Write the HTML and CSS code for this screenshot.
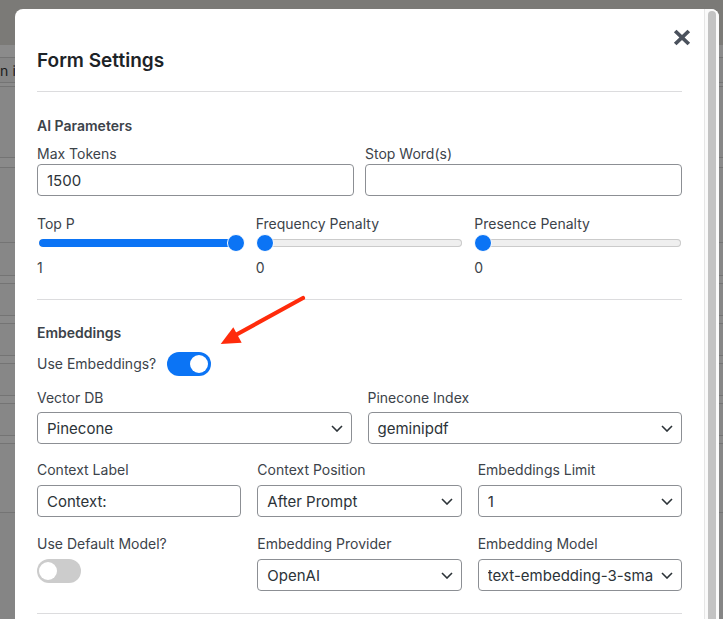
FILE: index.html
```html
<!DOCTYPE html>
<html lang="en">
<head>
<meta charset="utf-8">
<title>Form Settings</title>
<link rel="stylesheet" href="styles.css">
</head>
<body>
<div class="page">
  <div class="bg-row r1"></div>
  <div class="bg-row r2"></div>
  <div class="bg-row r3"><span class="bg-text">n icon</span></div>
  <div class="bg-row r4"></div>
  <div class="bg-row r5"></div>
  <div class="bg-row r6"></div>
  <div class="bg-row r7"></div>
  <div class="bg-row r8"></div>
  <div class="bg-row r9"></div>
  <div class="bg-row r10"></div>
  <div class="bg-row r9"></div>
  <div class="bg-row r10"></div>
  <div class="bg-row r9"></div>
  <div class="bg-row r10"></div>
  <div class="bg-row r9"></div>
  <div class="bg-row r10"></div>
  <div class="bg-row r9"></div>
  <div class="bg-row r11"></div>
</div>

<div class="modal">
  <div class="modal-body">
    <header class="modal-header">
      <h1 class="modal-title">Form Settings</h1>
    </header>

    <section class="section ai">
      <h2 class="section-title">AI Parameters</h2>
      <div class="grid two tight">
        <div class="field">
          <label class="label">Max Tokens</label>
          <input class="input" type="text" value="1500">
        </div>
        <div class="field">
          <label class="label">Stop Word(s)</label>
          <input class="input" type="text" value="">
        </div>
      </div>
      <div class="grid three tight sliders">
        <div class="field">
          <label class="label">Top P</label>
          <div class="range" style="--v:1">
            <div class="track"><div class="fill"></div></div>
            <span class="thumb"></span>
          </div>
          <div class="value">1</div>
        </div>
        <div class="field">
          <label class="label">Frequency Penalty</label>
          <div class="range" style="--v:0">
            <div class="track"><div class="fill"></div></div>
            <span class="thumb"></span>
          </div>
          <div class="value">0</div>
        </div>
        <div class="field">
          <label class="label">Presence Penalty</label>
          <div class="range" style="--v:0">
            <div class="track"><div class="fill"></div></div>
            <span class="thumb"></span>
          </div>
          <div class="value">0</div>
        </div>
      </div>
    </section>

    <section class="section emb">
      <h2 class="section-title">Embeddings</h2>
      <div class="toggle-row">
        <span class="label">Use Embeddings?</span>
        <span class="toggle on"><span class="knob"></span></span>
      </div>
      <div class="grid two wide row-vec">
        <div class="field">
          <label class="label">Vector DB</label>
          <div class="select"><span class="sel-val">Pinecone</span><svg class="chev" width="12" height="7" viewBox="0 0 12 7"><path d="M1 1l5 5 5-5" fill="none" stroke="#2c3338" stroke-width="1.6"/></svg></div>
        </div>
        <div class="field">
          <label class="label">Pinecone Index</label>
          <div class="select"><span class="sel-val">geminipdf</span><svg class="chev" width="12" height="7" viewBox="0 0 12 7"><path d="M1 1l5 5 5-5" fill="none" stroke="#2c3338" stroke-width="1.6"/></svg></div>
        </div>
      </div>
      <div class="grid three wide row-ctx">
        <div class="field">
          <label class="label">Context Label</label>
          <input class="input" type="text" value="Context:">
        </div>
        <div class="field">
          <label class="label">Context Position</label>
          <div class="select"><span class="sel-val">After Prompt</span><svg class="chev" width="12" height="7" viewBox="0 0 12 7"><path d="M1 1l5 5 5-5" fill="none" stroke="#2c3338" stroke-width="1.6"/></svg></div>
        </div>
        <div class="field">
          <label class="label">Embeddings Limit</label>
          <div class="select"><span class="sel-val">1</span><svg class="chev" width="12" height="7" viewBox="0 0 12 7"><path d="M1 1l5 5 5-5" fill="none" stroke="#2c3338" stroke-width="1.6"/></svg></div>
        </div>
      </div>
      <div class="grid three wide row-model">
        <div class="field">
          <label class="label">Use Default Model?</label>
          <span class="toggle off"><span class="knob"></span></span>
        </div>
        <div class="field">
          <label class="label">Embedding Provider</label>
          <div class="select"><span class="sel-val">OpenAI</span><svg class="chev" width="12" height="7" viewBox="0 0 12 7"><path d="M1 1l5 5 5-5" fill="none" stroke="#2c3338" stroke-width="1.6"/></svg></div>
        </div>
        <div class="field">
          <label class="label">Embedding Model</label>
          <div class="select"><span class="sel-val">text-embedding-3-small</span><svg class="chev" width="12" height="7" viewBox="0 0 12 7"><path d="M1 1l5 5 5-5" fill="none" stroke="#2c3338" stroke-width="1.6"/></svg></div>
        </div>
      </div>
    </section>
    <div class="section-end"></div>
  </div>

  <div class="scrollbar"><div class="scroll-thumb"></div></div>

  <button class="close" type="button" aria-label="Close">
    <svg width="18" height="17" viewBox="0 0 18 17"><path d="M2.2 2L15.8 15M15.8 2L2.2 15" stroke="#4b525d" stroke-width="3.8" fill="none"/></svg>
  </button>

  <svg class="annot-arrow" width="100" height="60" viewBox="0 0 100 60">
    <path d="M95 3 L24 42" stroke="#ff2b0b" stroke-width="4.2" stroke-linecap="round" fill="none"/>
    <polygon points="25.3,32.3 12.7,49 33.7,47.7" fill="#ff2b0b"/>
  </svg>
</div>
</body>
</html>
```
FILE: styles.css
```css
* { box-sizing: border-box; }

html, body {
  margin: 0;
  padding: 0;
  width: 723px;
  height: 619px;
  overflow: hidden;
}

body {
  background: #858585;
  font-family: "Inter", "Noto Sans", sans-serif;
  position: relative;
}

/* background page (dimmed) */
.page { display: flex; flex-direction: column; }
.bg-row { border-bottom: 1px solid #747474; background: #878787; }
.r1 { height: 45px; background: #7b7a77; border-bottom-color: #7b7a77; }
.r2 { height: 13px; background: #8b8b8b; }
.r3 { height: 25px; background: #868686; display: flex; align-items: center; }
.r4 { height: 4px; background: #8a8a8a; }
.r5 { height: 71px; }
.r6 { height: 10px; background: #8a8a8a; }
.r7 { height: 75px; }
.r8 { height: 33px; }
.r9 { height: 8px; background: #8a8a8a; }
.r10 { height: 32px; }
.r11 { height: 69px; }
.bg-text { font-size: 14px; color: #1c1c1c; padding-left: 0; white-space: nowrap; letter-spacing: 0.2px; }

/* modal */
.modal {
  position: absolute;
  left: 15px;
  top: 9px;
  width: 704px;
  height: 640px;
  background: #fff;
  border-radius: 8px 8px 0 0;
  display: flex;
  overflow: hidden;
}

.modal-body {
  flex: 1;
  padding: 0 22px;
  min-width: 0;
}

.modal-header {
  padding: 38px 0 16px;
  border-bottom: 1px solid #dcdcde;
}

.modal-title {
  margin: 0;
  font-size: 19px;
  line-height: 28px;
  font-weight: 600;
  color: #1d2327;
}

.close {
  position: absolute;
  right: 28px;
  top: 20px;
  width: 18px;
  height: 17px;
  padding: 0;
  border: 0;
  background: none;
  display: flex;
}

.scrollbar {
  width: 15px;
  flex: none;
  background: #fafafa;
  border-left: 1px solid #e6e6e6;
  padding: 2px 3px 0 3px;
}
.scroll-thumb {
  height: 100%;
  background: #c3c3c3;
  border-radius: 4px;
}

.annot-arrow {
  position: absolute;
  left: 193px;
  top: 286px;
}

/* sections */
.section { border-bottom: 1px solid #dcdcde; }
.section.ai { padding: 24px 0 21px; }
.section.emb { padding: 23px 0 22px; }

.section-title {
  margin: 0 0 8px;
  font-size: 14px;
  line-height: 20px;
  font-weight: 600;
  color: #3c434a;
}

.label {
  display: block;
  font-size: 14px;
  line-height: 20px;
  color: #3c434a;
}

.grid { display: grid; }
.grid.two { grid-template-columns: 1fr 1fr; }
.grid.three { grid-template-columns: 1fr 1fr 1fr; }
.grid.tight { column-gap: 11px; }
.grid.wide { column-gap: 16px; }

.field { display: flex; flex-direction: column; min-width: 0; }

.sliders { margin-top: 18px; }

.input, .select {
  height: 32px;
  border: 1px solid #8c8f94;
  border-radius: 4px;
  background: #fff;
  font-family: "Inter", "Noto Sans", sans-serif;
  font-size: 15px;
  color: #2c3338;
  padding: 0 9px;
  width: 100%;
  outline: none;
}

.select {
  display: flex;
  align-items: center;
  gap: 8px;
}
.sel-val {
  flex: 1;
  overflow: hidden;
  white-space: nowrap;
  min-width: 0;
}
.chev { flex: none; margin-right: -1px; }

.row-vec .select { margin-top: 4px; }
.row-vec { margin-top: 12px; }
.row-ctx { margin-top: 16px; }
.row-ctx .input, .row-ctx .select { margin-top: 5px; }
.row-model { margin-top: 17px; }
.row-model .select, .row-model .toggle { margin-top: 5px; }

/* range */
.range {
  position: relative;
  height: 18px;
  display: flex;
  align-items: center;
  padding: 0 1px 0 2px;
}
.track {
  flex: 1;
  height: 8px;
  border-radius: 4px;
  background: #efefef;
  box-shadow: inset 0 0 0 1px #cbcbcb;
  overflow: hidden;
}
.fill {
  height: 100%;
  width: calc(var(--v) * 100%);
  background: #0b74f5;
  border-radius: 4px;
}
.thumb {
  position: absolute;
  top: 0;
  left: calc(var(--v) * (100% - 18px));
  width: 18px;
  height: 18px;
  border-radius: 50%;
  background: #0b74f5;
  border: 1px solid #fff;
}
.value {
  margin-top: 6px;
  font-size: 14px;
  line-height: 20px;
  color: #3c434a;
}

/* toggles */
.toggle-row {
  display: flex;
  align-items: center;
  gap: 11px;
  height: 25px;
}
.toggle {
  width: 44px;
  height: 24px;
  border-radius: 12px;
  display: flex;
  align-items: center;
  padding: 0 3px;
  flex: none;
}
.toggle.on { background: #0b74f5; justify-content: flex-end; }
.toggle.off { background: #cccccc; justify-content: flex-start; padding-left: 2px; }
.knob {
  width: 18px;
  height: 18px;
  border-radius: 50%;
  background: #fff;
}
.section-end { height: 10px; }
```
